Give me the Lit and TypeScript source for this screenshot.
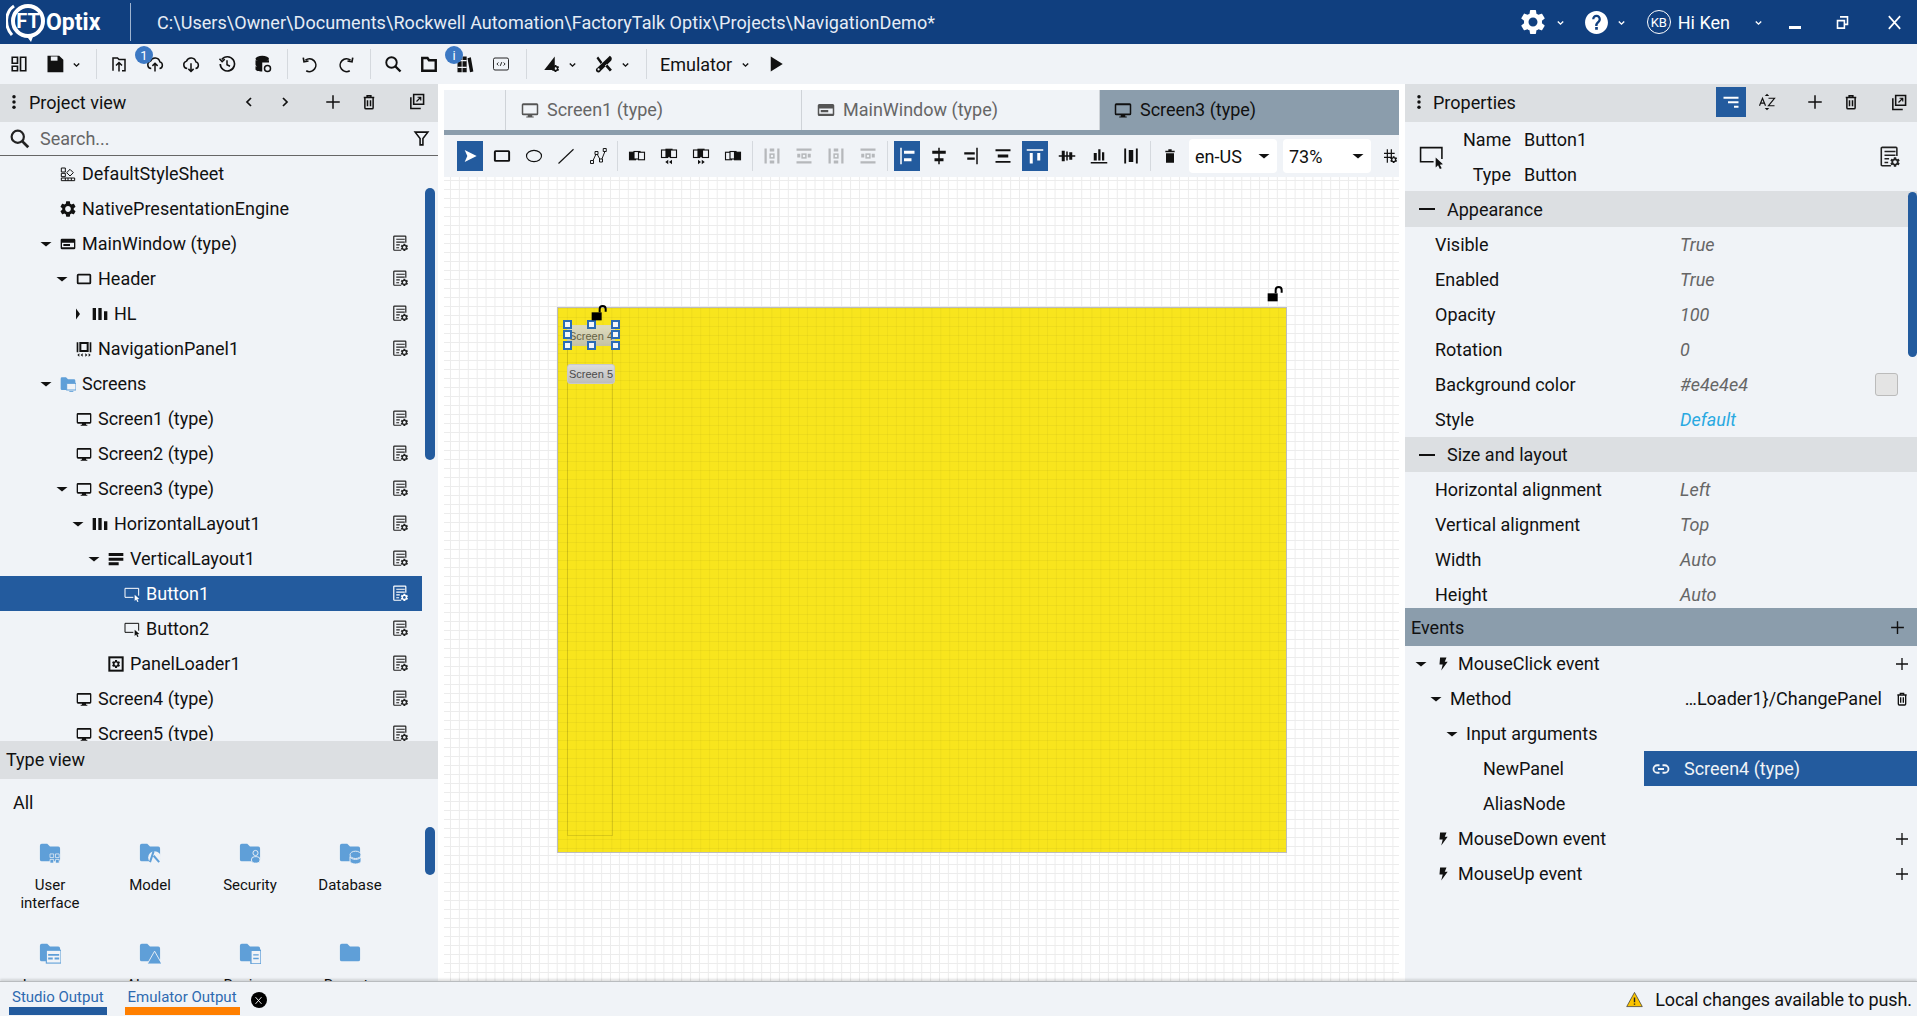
import { LitElement, html, css, svg } from 'lit';
import { customElement } from 'lit/decorators.js';

const GEAR = 'M19.14 12.94c.04-.3.06-.61.06-.94 0-.32-.02-.64-.07-.94l2.03-1.58c.18-.14.23-.41.12-.61l-1.92-3.32c-.12-.22-.37-.29-.59-.22l-2.39.96c-.5-.38-1.03-.7-1.62-.94l-.36-2.54c-.04-.24-.24-.41-.48-.41h-3.84c-.24 0-.43.17-.47.41l-.36 2.54c-.59.24-1.13.57-1.62.94l-2.39-.96c-.22-.08-.47 0-.59.22L2.74 8.87c-.12.21-.08.47.12.61l2.03 1.58c-.05.3-.09.63-.09.94s.02.64.07.94l-2.03 1.58c-.18.14-.23.41-.12.61l1.92 3.32c.12.22.37.29.59.22l2.39-.96c.5.38 1.03.7 1.62.94l.36 2.54c.05.24.24.41.48.41h3.84c.24 0 .44-.17.47-.41l.36-2.54c.59-.24 1.13-.56 1.62-.94l2.39.96c.22.08.47 0 .59-.22l1.92-3.32c.12-.22.07-.47-.12-.61l-2.01-1.58zM12 15.6c-1.98 0-3.6-1.62-3.6-3.6s1.62-3.6 3.6-3.6 3.6 1.62 3.6 3.6-1.62 3.6-3.6 3.6z';
const HELP = 'M12 1C5.9 1 1 5.9 1 12s4.9 11 11 11 11-4.9 11-11S18.100 1 12 1zm1.300 18h-2.600v-2.600h2.600V19zm2-7.600l-1 1c-.9.900-1.300 1.500-1.300 3h-2.300v-.6c0-1.200.5-2.300 1.300-3.100l1.400-1.400c.4-.4.6-.900.6-1.500 0-1.100-.9-2-2-2s-2 .9-2 2H7.800c0-2.300 1.900-4.200 4.200-4.200s4.200 1.900 4.200 4.200c0 1-.4 1.900-.9 2.600z';
const FOLDER = 'M1 4a2 2 0 0 1 2-2h6l3 3h9a2 2 0 0 1 2 2v12a2 2 0 0 1-2 2H3a2 2 0 0 1-2-2z';

const line = (d: string, w = 2) => svg`<path d=${d} fill="none" stroke="currentColor" stroke-width=${w} />`;
const gearAt = (x: number, y: number, s: number) =>
  svg`<path d=${GEAR} fill="currentColor" transform="translate(${x} ${y}) scale(${s})" />`;
const stacks = (front: number) => svg`
  <rect x="2" y="7" width="8" height="10" fill=${front === 0 ? 'currentColor' : 'none'} stroke="currentColor" stroke-width="1.500" />
  <rect x="8" y="6" width="8" height="10" fill=${front === 1 ? 'currentColor' : '#f0f3f7'} stroke="currentColor" stroke-width="1.500" />
  <rect x="14" y="7" width="8" height="10" fill=${front === 2 ? 'currentColor' : '#f0f3f7'} stroke="currentColor" stroke-width="1.500" />`;

const ICONS: Record<string, unknown> = {
  gear: svg`<path d=${GEAR} fill="currentColor" />`,
  gearBig: gearAt(-2.4, -2.4, 1.2),
  help: svg`<path d=${HELP} fill="currentColor" />`,
  chev: line('M7 10l5 5 5-5', 2.6),
  chevL: line('M15 6l-6 6 6 6', 2.6),
  chevR: line('M9 6l6 6-6 6', 2.6),
  plus: line('M12 3v18M3 12h18', 2),
  trash: svg`<path d="M5 6h14M9.500 6V3.500h5V6M6.500 6.500v13a1.500 1.500 0 0 0 1.500 1.500h8a1.500 1.500 0 0 0 1.500-1.500v-13M10 9.500v8M14 9.500v8" fill="none" stroke="currentColor" stroke-width="2" />`,
  trashFill: svg`<path d="M6 8h12v14H6zM5 4h14v2.500H5zM9.500 2h5v2h-5z" fill="currentColor" />`,
  copy: svg`<path d="M8 2h14v14H8zM4 6v16h14" fill="none" stroke="currentColor" stroke-width="2.200" /><path d="M12 12l6-6M13.500 6H18v4.500" fill="none" stroke="currentColor" stroke-width="1.700" />`,
  dots: svg`<circle cx="12" cy="5" r="2.300" fill="currentColor" /><circle cx="12" cy="12" r="2.300" fill="currentColor" /><circle cx="12" cy="19" r="2.300" fill="currentColor" />`,
  search: svg`<circle cx="10" cy="10" r="7" fill="none" stroke="currentColor" stroke-width="2.500" /><path d="M15 15l7 7" stroke="currentColor" stroke-width="3.200" />`,
  filter: svg`<path d="M3 3h18l-7 9v9h-4v-9z" fill="none" stroke="currentColor" stroke-width="2.200" />`,
  panels: svg`<path d="M3 3h7v8H3zM3 15h7v6H3zM14 3h7v18h-7z" fill="none" stroke="currentColor" stroke-width="2.200" />`,
  save: svg`<path d="M3 2h14l5 5v15H3z" fill="currentColor" /><rect x="7" y="3" width="8" height="5" fill="#f0f3f7" />`,
  upFolder: svg`<path d="M4 21V4h6l2 2h8v15h-4" fill="none" stroke="currentColor" stroke-width="2" /><path d="M12 22V11M8 14l4-4 4 4" fill="none" stroke="currentColor" stroke-width="2" />`,
  cloudUp: svg`<path d="M7 18a5 5 0 0 1-1-9.800 6.500 6.500 0 0 1 12.500 1A4.500 4.500 0 0 1 18 18" fill="none" stroke="currentColor" stroke-width="2" /><path d="M12 22V11M8.500 14.500L12 11l3.500 3.500" fill="none" stroke="currentColor" stroke-width="2" />`,
  cloudDown: svg`<path d="M7 18a5 5 0 0 1-1-9.800 6.500 6.500 0 0 1 12.500 1A4.500 4.500 0 0 1 18 18" fill="none" stroke="currentColor" stroke-width="2" /><path d="M12 11v11M8.500 18.500L12 22l3.500-3.500" fill="none" stroke="currentColor" stroke-width="2" />`,
  history: svg`<path d="M5 6a9.500 9.500 0 1 1-2 6" fill="none" stroke="currentColor" stroke-width="2.200" /><path d="M2 5l3.500 4L9 5.500M12 7v6l4 2" fill="none" stroke="currentColor" stroke-width="2" />`,
  db: svg`<ellipse cx="11" cy="5" rx="9" ry="4" fill="currentColor" /><path d="M2 7v6c0 2 4 4 9 4V7zM20 7v3h-9V7zM2 15v4c0 2 4 3 9 3v-5z" fill="currentColor" /><circle cx="18" cy="18" r="4" fill="none" stroke="currentColor" stroke-width="2" />`,
  undo: svg`<path d="M6 7a8.500 8.500 0 1 1 1 14" fill="none" stroke="currentColor" stroke-width="2.200" /><path d="M3 3.500l1 5.500 6-1" fill="none" stroke="currentColor" stroke-width="2.200" />`,
  redo: svg`<path d="M18 7a8.500 8.500 0 1 0-1 14" fill="none" stroke="currentColor" stroke-width="2.200" /><path d="M21 3.500l-1 5.500-6-1" fill="none" stroke="currentColor" stroke-width="2.200" />`,
  folderOut: svg`<path d="M3 4h7l2 3h9v14H3z" fill="none" stroke="currentColor" stroke-width="3.200" />`,
  library: svg`<path d="M3 3h5v19H3zM9 3h5v19H9zM15 5l4-1 3 17-4 1z" fill="currentColor" /><path d="M3 8h11M3 16h11" stroke="#f0f3f7" stroke-width="1.500" />`,
  code: svg`<rect x="2" y="4" width="20" height="16" rx="2" fill="none" stroke="currentColor" stroke-width="1.200" /><path d="M8.500 10l-2 2 2 2M15.500 10l2 2-2 2M13 9.500l-2 5" fill="none" stroke="currentColor" stroke-width="1.200" />`,
  shape: svg`<path d="M17 2v18H3z" fill="currentColor" />${gearAt(12, 12, 0.5)}`,
  tools: svg`<path d="M5 3l5 7-2 2-5-7zM19 2a4 4 0 0 1 1.500 6L8 20.500a3 3 0 1 1-4-4L16 5zM13 14l6 7 2.500-2-6-7" fill="currentColor" /><circle cx="5.500" cy="18.500" r="1.300" fill="#f0f3f7" />`,
  play: svg`<path d="M5 2l16 10L5 22z" fill="currentColor" />`,
  arrow: svg`<path d="M4 3l18 9-18 9 4-9z" fill="currentColor" />`,
  rect: svg`<rect x="2.500" y="5.500" width="19" height="13" rx="1" fill="none" stroke="currentColor" stroke-width="2.600" />`,
  ellipse: svg`<ellipse cx="12" cy="12" rx="10" ry="7.500" fill="none" stroke="currentColor" stroke-width="1.500" />`,
  diag: line('M2 22L22 3', 1.500),
  poly: svg`<path d="M4 21L10 8l6 11 6-15" fill="none" stroke="currentColor" stroke-width="1.300" /><path d="M2 18h4v4H2zM8 6h4v4H8zM14 16h4v4h-4zM19 2h4v4h-4z" fill="#f0f3f7" stroke="currentColor" stroke-width="1.300" />`,
  ordA: svg`${stacks(0)}`,
  ordB: svg`<g transform="translate(0 -3)">${stacks(1)}</g><path d="M11 17v6l-4-3zM16 17v6l-4-3z" fill="currentColor" />`,
  ordC: svg`<g transform="translate(0 -3)">${stacks(1)}</g><path d="M8 17v6l4-3zM13 17v6l4-3z" fill="currentColor" />`,
  ordD: svg`${stacks(2)}`,
  distA: svg`<path d="M2 2h3v20H2zM19 2h3v20h-3z" fill="currentColor" /><rect x="9" y="2" width="6" height="4" fill="currentColor" /><rect x="9.500" y="9.500" width="5" height="5" fill="none" stroke="currentColor" stroke-width="2" /><rect x="9" y="18" width="6" height="4" fill="currentColor" />`,
  distB: svg`<path d="M2 2h20v3H2zM2 19h20v3H2z" fill="currentColor" /><rect x="3" y="9" width="4" height="5" fill="currentColor" /><rect x="9.500" y="9.500" width="5" height="5" fill="none" stroke="currentColor" stroke-width="2" /><rect x="17" y="9" width="4" height="5" fill="currentColor" />`,
  alL: svg`<path d="M3 1h2v22H3zM8 5h14v4H8zM8 15h10v4H8z" fill="currentColor" />`,
  alC: svg`<path d="M11 1h2v22h-2zM3 5h18v4H3zM6 15h12v4H6z" fill="currentColor" />`,
  alR: svg`<path d="M19 1h2v22h-2zM3 7h14v3H3zM7 14h10v3H7z" fill="currentColor" />`,
  alV: svg`<path d="M2 3h20v2.500H2zM2 18.500h20V21H2zM5 10h14v4H5z" fill="currentColor" />`,
  alT: svg`<path d="M1 3h22v2H1zM5 8h4v14H5zM15 8h4v10h-4z" fill="currentColor" />`,
  alM: svg`<path d="M1 11h22v2H1zM5 5h4v14H5zM15 7h4v10h-4zM11 6h2v12h-2z" fill="currentColor" />`,
  alB: svg`<path d="M1 20h22v2H1zM5 8h4v10H5zM11 3h3v15h-3zM16 7h3v11h-3z" fill="currentColor" />`,
  alE: svg`<path d="M3 2h2.500v20H3zM18.500 2H21v20h-2.500zM9 4h6v16H9z" fill="currentColor" />`,
  gridGear: svg`<path d="M3 8h16M3 14h12M8 2v20M14 2v14" fill="none" stroke="currentColor" stroke-width="1.800" />${gearAt(11, 11, 0.54)}`,
  propDoc: svg`<path d="M13 21.500H3.500a1 1 0 0 1-1-1v-18a1 1 0 0 1 1-1h15a1 1 0 0 1 1 1V11" fill="none" stroke="currentColor" stroke-width="1.700" /><path d="M6 6h12M6 10h12M6 14h5M6 18h4" stroke="currentColor" stroke-width="1.600" />${gearAt(11, 11, 0.54)}`,
  sheet: svg`<path d="M2 3h6v6H2zM2 11h6v5H2zM2 18h20v4H2z" fill="none" stroke="currentColor" stroke-width="1.500" /><path d="M15 5l5 5-5 5-5-5z" fill="none" stroke="currentColor" stroke-width="1.500" /><path d="M8 18v4M12 18v4M17 18v4" stroke="currentColor" stroke-width="1.500" />`,
  window: svg`<path fill-rule="evenodd" d="M3 4h18a2 2 0 0 1 2 2v12a2 2 0 0 1-2 2H3a2 2 0 0 1-2-2V6a2 2 0 0 1 2-2zm0 6v7h18v-7zm2 2h10v3H5z" fill="currentColor" />`,
  hl: svg`<path d="M1 3h5v18H1zM9.500 3h5v18h-5zM18 8h5v13h-5z" fill="currentColor" />`,
  vl: svg`<path d="M1 3h22v4.500H1zM1 10h22v4.500H1zM1 17h15v4.500H1z" fill="currentColor" />`,
  nav: svg`<path d="M1 2h2.500v15H1zM20.500 2H23v15h-2.500z" fill="currentColor" /><rect x="6.500" y="3" width="11" height="12" fill="none" stroke="currentColor" stroke-width="3" /><path d="M2 21l3-2.500v5zM7 21l3-2.500v5zM22 21l-3-2.500v5zM17 21l-3-2.500v5z" fill="currentColor" />`,
  monitor: svg`<path fill-rule="evenodd" d="M3 3h18a2 2 0 0 1 2 2v12a2 2 0 0 1-2 2h-6v1.500h2V22H7v-1.500h2V19H3a2 2 0 0 1-2-2V5a2 2 0 0 1 2-2zm0 2.500V16.500h18V5.500z" fill="currentColor" />`,
  folderMon: svg`<path d=${FOLDER} fill="#5f9fd8" /><rect x="10" y="11" width="14" height="10" fill="#f0f3f7" stroke="#5f9fd8" stroke-width="1.500" /><path d="M14 23.500h6" stroke="#5f9fd8" stroke-width="1.500" />`,
  button: svg`<path d="M14 17H1.500V3.500h20.500v11" fill="none" stroke="currentColor" stroke-width="1.500" /><path d="M16 13l7 6.500-3 .3 1.800 3.500-1.800.7-1.700-3.600-2.300 2.100z" fill="currentColor" />`,
  loader: svg`<rect x="2" y="2" width="20" height="20" fill="none" stroke="currentColor" stroke-width="3" />${gearAt(4.500, 4.500, 0.63)}`,
  caretD: svg`<path d="M1 8h22L12 17z" fill="currentColor" />`,
  caretR: svg`<path d="M8 1v22l8-11z" fill="currentColor" />`,
  bolt: svg`<path d="M7 1h11l-3 7h5L9 23l2.500-10H6z" fill="currentColor" />`,
  link: svg`<path d="M10 7H7a5 5 0 0 0 0 10h3M14 7h3a5 5 0 0 1 0 10h-3M8 12h8" fill="none" stroke="currentColor" stroke-width="2.400" />`,
  sortList: svg`<path d="M2 5h20v2.500H2zM8 11h14v2.500H8zM16 17h6v2.500h-6z" fill="currentColor" />`,
  az: svg`<path d="M12 1l3 3H9zM12 23l-3-3h6z" fill="currentColor" /><path d="M2 17l4-10 4 10M3.500 13.500h5M14 7h8l-8 10h8" fill="none" stroke="currentColor" stroke-width="1.600" />`,
  restore: svg`<path d="M8 3h12v12h-5M4 9h11v12H4z" fill="none" stroke="currentColor" stroke-width="2.500" />`,
  closeX: line('M4 3l16 18M20 3L4 21', 2.400),
  warn: svg`<path d="M12 2l11 20H1z" fill="#fbc400" stroke="#333" stroke-width="1" /><path d="M11 9h2v7h-2zM11 17.500h2v2h-2z" fill="#222" />`,
  lock: svg`<rect x="1" y="11" width="15" height="12" fill="currentColor" /><path d="M13 11V6a4.500 4.500 0 0 1 9 0v4" fill="none" stroke="currentColor" stroke-width="3" />`,
};

const ic = (name: string, size = 18) =>
  html`<svg class="ic" viewBox="0 0 24 24" width=${size} height=${size}>${ICONS[name]}</svg>`;

const tile = (overlay: unknown) =>
  html`<svg viewBox="0 0 24 24" width="22" height="22"><path d=${FOLDER} fill="#5f9fd8" />${overlay}</svg>`;

interface TreeItem { label: string; level: number; icon: string; caret?: 'd' | 'r'; doc?: boolean; sel?: boolean; }

const TREE: TreeItem[] = [
  { label: 'DefaultStyleSheet', level: 0, icon: 'sheet' },
  { label: 'NativePresentationEngine', level: 0, icon: 'gearBig' },
  { label: 'MainWindow (type)', level: 0, icon: 'window', caret: 'd', doc: true },
  { label: 'Header', level: 1, icon: 'rect', caret: 'd', doc: true },
  { label: 'HL', level: 2, icon: 'hl', caret: 'r', doc: true },
  { label: 'NavigationPanel1', level: 1, icon: 'nav', doc: true },
  { label: 'Screens', level: 0, icon: 'folderMon', caret: 'd' },
  { label: 'Screen1 (type)', level: 1, icon: 'monitor', doc: true },
  { label: 'Screen2 (type)', level: 1, icon: 'monitor', doc: true },
  { label: 'Screen3 (type)', level: 1, icon: 'monitor', caret: 'd', doc: true },
  { label: 'HorizontalLayout1', level: 2, icon: 'hl', caret: 'd', doc: true },
  { label: 'VerticalLayout1', level: 3, icon: 'vl', caret: 'd', doc: true },
  { label: 'Button1', level: 4, icon: 'button', doc: true, sel: true },
  { label: 'Button2', level: 4, icon: 'button', doc: true },
  { label: 'PanelLoader1', level: 3, icon: 'loader', doc: true },
  { label: 'Screen4 (type)', level: 1, icon: 'monitor', doc: true },
  { label: 'Screen5 (type)', level: 1, icon: 'monitor', doc: true },
];

const TILES: [string, unknown][] = [
  ['User interface', svg`<path d="M12 13h4v4h-4zM18 13h4v4h-4zM12 19h4v4h-4zM18 19h4v4h-4z" fill="#5f9fd8" stroke="#f0f3f7" stroke-width=".8" />`],
  ['Model', svg`<circle cx="17" cy="17" r="7" fill="#f0f3f7" /><path d="M16 10l-4 12M16 15l6 7" stroke="#5f9fd8" stroke-width="2.200" fill="none" />`],
  ['Security', svg`<circle cx="18" cy="12" r="2.800" fill="#5f9fd8" stroke="#f0f3f7" /><rect x="13.500" y="16" width="9.500" height="7" rx="3.500" fill="#5f9fd8" stroke="#f0f3f7" />`],
  ['Database', svg`<ellipse cx="18" cy="14" rx="6" ry="4" fill="#5f9fd8" stroke="#f0f3f7" /><path d="M12 16v5c0 1.500 3 3 6 3s6-1.500 6-3v-5c0 1.500-3 3-6 3s-6-1.500-6-3z" fill="#5f9fd8" stroke="#f0f3f7" />`],
  ['Loggers', svg`<rect x="8" y="9" width="16" height="14" fill="#f0f3f7" stroke="#5f9fd8" stroke-width="1.200" /><path d="M10 13h12v2H10zM10 17h5v2h-5zM17 17h5v2h-5z" fill="#5f9fd8" />`],
  ['Alarms', svg`<path d="M17 10l8 14H9z" fill="#5f9fd8" stroke="#f0f3f7" />`],
  ['Recipes', svg`<rect x="13" y="9" width="11" height="15" rx="1" fill="#f0f3f7" stroke="#5f9fd8" stroke-width="1.500" /><path d="M15.500 14h6M15.500 18h6" stroke="#5f9fd8" stroke-width="1.500" />`],
  ['Reports', svg``],
];

const APPEARANCE: [string, string, string?][] = [
  ['Visible', 'True'], ['Enabled', 'True'], ['Opacity', '100'], ['Rotation', '0'],
  ['Background color', '#e4e4e4', 'swatch'], ['Style', 'Default', 'link'],
];
const SIZING: [string, string, string?][] = [
  ['Horizontal alignment', 'Left'], ['Vertical alignment', 'Top'], ['Width', 'Auto'], ['Height', 'Auto'],
];

@customElement('app-root')
export class AppRoot extends LitElement {
  static styles = css`
    :host {
      display: flex;
      flex-direction: column;
      width: 1917px;
      height: 1016px;
      overflow: hidden;
      background: #fff;
      font-family: Roboto, "Noto Sans", sans-serif;
      font-size: 18px;
      color: #111;
    }
    .ic { display: block; flex: none; }

    .title {
      display: flex;
      align-items: center;
      height: 44px;
      flex: none;
      background: #103f7f;
      color: #fff;
      padding-left: 6px;
    }
    .logo-name { font-size: 23px; font-weight: 700; width: 84px; }
    .title-div { width: 1px; height: 38px; background: #9fb4d0; }
    .path { margin-left: 26px; flex: 1; color: #e6ecf5; letter-spacing: 0.06px; }
    .title .ic { color: #fff; }
    .t-gear { margin-right: 6px; }
    .t-chev { margin-right: 19px; }
    .t-chev.first { margin-right: 17px; }
    .hi { margin: 0 22px 0 7px; }
    .kb {
      width: 22px; height: 22px; border: 1px solid #fff; border-radius: 50%;
      font-size: 13px; display: flex; align-items: center; justify-content: center;
    }
    .min { width: 12px; height: 3px; background: #fff; margin: 10px 34px 0 24px; }
    .restore { margin-right: 36px; }
    .x { margin-right: 14px; }

    .toolbar {
      display: flex;
      align-items: center;
      height: 40px;
      flex: none;
      background: #f0f3f7;
      padding-left: 1px;
    }
    .tb { width: 36px; height: 36px; display: flex; align-items: center; justify-content: center; position: relative; }
    .tb-caret { width: 14px; display: flex; justify-content: center; margin: 0 7px 0 -4px; }
    .sep { width: 1px; height: 30px; background: #d5d9de; margin: 0 4px 0 6px; }
    .sep.wide { margin-left: 7px; margin-right: 6px; }
    .emu { margin-left: 7px; }
    .emu-caret { margin: 0 6px 0 6px; width: 14px; display: flex; justify-content: center; }
    .badge {
      position: absolute; top: 0; left: -2px;
      width: 18px; height: 18px; border-radius: 50%;
      background: #3c78c3; color: #fff; font-size: 13px;
      display: flex; align-items: center; justify-content: center;
    }

    .main { display: flex; flex: 1; min-height: 0; background: #fff; }

    .left { width: 438px; flex: none; display: flex; flex-direction: column; background: #f0f3f7; }
    .head {
      display: flex; align-items: center;
      height: 38px; flex: none; box-sizing: border-box;
      padding-bottom: 2px;
      background: #dcdfe2;
    }
    .head .grip { margin: 0 6px 0 5px; }
    .pv-nav { margin-left: 115px; display: flex; gap: 20px; }
    .pv-acts { margin-left: 31px; display: flex; }
    .pv-acts .ic { margin-right: 18px; }
    .pv-acts .ic:last-child { margin: 0 0 0 12px; }
    .search {
      display: flex; align-items: center; height: 33px; flex: none;
      border-bottom: 1px solid #666; padding-left: 9px;
      color: #666;
    }
    .search .ic:first-child { color: #222; margin-right: 10px; }
    .search span { flex: 1; }
    .search .ic:last-child { color: #111; margin-right: 8px; }

    .tree-wrap { display: flex; height: 585px; flex: none; overflow: hidden; }
    .tree { width: 422px; flex: none; }
    .row { display: flex; align-items: center; height: 35px; padding-right: 13px; box-sizing: border-box; }
    .row.sel { background: #235b9e; color: #fff; }
    .caret { width: 20px; flex: none; display: flex; justify-content: flex-start; }
    .ti { width: 16px; flex: none; margin-right: 6px; }
    .doc { margin-left: auto; color: #222; }
    .row.sel .doc { color: #fff; }
    .track { padding-left: 3px; }
    .thumb { width: 10px; border-radius: 5px; background: #235b9e; }
    .thumb.tree-thumb { margin-top: 32px; height: 272px; }
    .thumb.type-thumb { margin-top: 48px; height: 48px; }

    .type-head { padding-left: 6px; }
    .type-body { flex: 1; min-height: 0; overflow: hidden; display: flex; }
    .type-main { width: 422px; flex: none; }
    .all { height: 46px; display: flex; align-items: center; padding-left: 13px; }
    .tiles { display: grid; grid-template-columns: repeat(4, 100px); grid-auto-rows: 100px; }
    .tile { display: flex; flex-direction: column; align-items: center; padding-top: 17px; font-size: 15px; line-height: 18px; text-align: center; }
    .tile svg { margin-bottom: 12px; flex: none; }
    .tile span { width: 70px; }

    .center { width: 955px; flex: none; margin: 0 6px; display: flex; flex-direction: column; padding-top: 6px; }
    .tabs {
      display: flex; height: 45px; flex: none; box-sizing: border-box;
      background: #f0f3f7; border-bottom: 5px solid #8b9dac;
    }
    .tab { display: flex; align-items: center; gap: 8px; color: #666; box-sizing: border-box; padding-bottom: 1px; }
    .tab .ic { color: #555; }
    .tab.t1 { margin-left: 61px; width: 296px; padding-left: 15px; border-left: 1px solid #cfd3d8; }
    .tab.t2 { width: 299px; padding-left: 15px; border-left: 1px solid #cfd3d8; border-right: 1px solid #cfd3d8; }
    .tab.t3 { flex: 1; background: #8b9dac; color: #111; padding-left: 14px; }
    .tab.t3 .ic { color: #111; }
    .ctools {
      display: flex; align-items: center; height: 42px; flex: none;
      background: #f0f3f7; padding-left: 13px;
    }
    .cb { width: 26px; height: 30px; display: flex; align-items: center; justify-content: center; margin-right: 6px; }
    .cb.on { background: #235b9e; color: #fff; }
    .cb.off { color: #b5b8bb; }
    .csep { width: 1px; height: 30px; background: #d5d9de; margin: 0 6px 0 0; }
    .sel-box {
      width: 88px; height: 34px; background: #fff; border-radius: 4px; box-sizing: border-box;
      display: flex; align-items: center; justify-content: space-between;
      padding: 0 7px 0 6px; margin-right: 6px;
    }
    .grid-gear { margin-left: 5px; }
    .canvas {
      position: relative; flex: 1; min-height: 0; overflow: hidden;
      background-color: #fff;
      background-image:
        linear-gradient(to right, #ececec 1px, transparent 1px),
        linear-gradient(to bottom, #ececec 1px, transparent 1px);
      background-size: 8.9px 9px;
      background-position: 6px 3px;
    }
    .stage {
      position: absolute; left: 113px; top: 130px; width: 730px; height: 546px;
      box-sizing: border-box;
      border: 1px solid #bdbdbd;
      background-color: #f8e51d;
      background-image:
        linear-gradient(to right, rgba(0,0,0,.04) 1px, transparent 1px),
        linear-gradient(to bottom, rgba(0,0,0,.04) 1px, transparent 1px);
      background-size: 8.9px 9px;
    }
    .outline { position: absolute; left: 9px; top: 17px; width: 46px; height: 511px; border: 1px solid rgba(0,0,0,.12); box-sizing: border-box; }
    .btn {
      position: absolute; left: 9px; box-sizing: border-box;
      font: 11px "Liberation Sans", sans-serif; color: #4a4a4a;
      background: linear-gradient(#dcdcdc, #bdbdbd);
      display: flex; align-items: center; justify-content: center;
    }
    .b4 { top: 17px; width: 48px; height: 21px; opacity: .85; }
    .b5 { top: 56px; width: 48px; height: 20px; border-radius: 3px; border: 1px solid #c9c9c9; }
    .handle { position: absolute; width: 9px; height: 9px; box-sizing: border-box; background: #f3f6fa; border: 2px solid #2b6cb5; }
    .lock { position: absolute; color: #000; }

    .right { width: 512px; flex: none; display: flex; flex-direction: column; background: #f0f3f7; }
    .prop-head .ic:first-child { margin: 0 5px 0 5px; }
    .prop-tools { margin-left: auto; display: flex; align-items: center; }
    .pt-on { width: 30px; height: 30px; background: #235b9e; color: #fff; display: flex; align-items: center; justify-content: center; margin-right: 12px; }
    .gap-az { width: 30px; }
    .gap-plus { width: 18px; }
    .gap-trash { width: 30px; }
    .gap-end { width: 10px; }
    .prop-scroll { position: relative; height: 486px; flex: none; overflow: hidden; }
    .thumb.prop-thumb { position: absolute; right: 0; top: 70px; height: 165px; width: 9px; border-radius: 5px; }
    .ident { display: flex; align-items: center; height: 69px; padding-left: 14px; }
    .ident-names { margin-left: 19px; display: grid; grid-template-columns: 48px auto; column-gap: 13px; grid-auto-rows: 35px; align-items: center; }
    .ident-names b { font-weight: 400; text-align: right; }
    .ident .doc { margin-right: 16px; }
    .g-head { display: flex; align-items: center; height: 35px; background: #dcdfe2; padding-left: 14px; gap: 12px; }
    .g-head.first { height: 36px; }
    .dash { width: 16px; height: 2px; background: #111; }
    .p-row { display: flex; align-items: center; height: 35px; padding-left: 30px; }
    .p-label { width: 245px; flex: none; }
    .p-val { font-style: italic; color: #666; }
    .p-val.link { color: #29a9e1; }
    .swatch { width: 23px; height: 23px; background: #e4e4e4; border: 1px solid #bbb; border-radius: 3px; box-sizing: border-box; margin-left: auto; margin-right: 19px; }
    .ev-head { display: flex; align-items: center; justify-content: space-between; height: 38px; flex: none; background: #8b9dac; padding: 0 11px 0 6px; box-sizing: border-box; }
    .e-row { display: flex; align-items: center; height: 35px; position: relative; padding-right: 7px; }
    .e-row .end { margin-left: auto; }
    .lv0 { padding-left: 10px; }
    .lv1 { padding-left: 25px; }
    .lv2 { padding-left: 41px; }
    .lv3 { padding-left: 78px; }
    .nocap { padding-left: 30px; }
    .e-row .c { width: 20px; flex: none; }
    .ev-bolt-wrap { width: 22px; flex: none; display: flex; justify-content: flex-start; margin-left: 1px; }
    .method-val { margin-left: auto; margin-right: 12px; }
    .bound {
      position: absolute; left: 239px; right: 0; top: 0; bottom: 0;
      background: #235b9e; color: #f0f3f7;
      display: flex; align-items: center; gap: 14px; padding-left: 8px;
    }

    .status {
      display: flex; align-items: center; height: 35px; flex: none; box-sizing: border-box;
      background: #f0f3f7; border-top: 1px solid #b9bcbf; box-shadow: 0 -2px 2px rgba(0,0,0,.12);
      position: relative; font-size: 15px; padding-left: 9px;
    }
    .out { height: 32px; box-sizing: border-box; padding: 6px 3px 0; color: #2e6ab0; border-bottom: 8px solid #235b9e; margin-right: 18px; line-height: 16px; }
    .out.emu-out { border-bottom-color: #ff7f00; margin-right: 11px; }
    .dismiss { width: 16px; height: 16px; border-radius: 50%; background: #000; color: #fff; display: flex; align-items: center; justify-content: center; margin-top: 2px; }
    .local { margin-left: auto; display: flex; align-items: center; gap: 12px; font-size: 18px; padding-right: 5px; letter-spacing: -0.1px; }
  `;

  private renderTree() {
    return TREE.map(
      (t) => html`
        <div class="row ${t.sel ? 'sel' : ''}" style="padding-left:${40 + t.level * 16}px">
          <span class="caret">${t.caret === 'd' ? ic('caretD', 12) : t.caret === 'r' ? ic('caretR', 12) : ''}</span>
          <span class="ti">${ic(t.icon, 16)}</span>
          <span>${t.label}</span>
          ${t.doc ? html`<span class="doc">${ic('propDoc', 17)}</span>` : ''}
        </div>
      `,
    );
  }

  private renderProps(rows: [string, string, string?][]) {
    return rows.map(
      ([k, v, kind]) => html`
        <div class="p-row">
          <span class="p-label">${k}</span>
          <span class="p-val ${kind === 'link' ? 'link' : ''}">${v}</span>
          ${kind === 'swatch' ? html`<span class="swatch"></span>` : ''}
        </div>
      `,
    );
  }

  private cb(name: string, cls = '', size = 18) {
    return html`<span class="cb ${cls}">${ic(name, size)}</span>`;
  }

  private handles() {
    const pts = [[9, 15], [33, 15], [57, 15], [9, 25], [57, 25], [9, 36], [33, 36], [57, 36]];
    return pts.map(([x, y]) => html`<span class="handle" style="left:${x - 4}px;top:${y - 3}px"></span>`);
  }

  render() {
    return html`
      <div class="title">
        <svg viewBox="0 0 40 40" width="40" height="40">
          <path d="M6 33C-2 24-1 10 8 4" fill="none" stroke="#fff" stroke-width="3" />
          <circle cx="22" cy="19" r="15" fill="#103f7f" stroke="#fff" stroke-width="4" />
          <path d="M19 32l6 8 3-8z" fill="#fff" />
          <text x="22" y="26" text-anchor="middle" font-family="Roboto" font-weight="700" font-size="20" fill="#fff">FT</text>
        </svg>
        <span class="logo-name">Optix</span>
        <span class="title-div"></span>
        <span class="path">C:\\Users\\Owner\\Documents\\Rockwell Automation\\FactoryTalk Optix\\Projects\\NavigationDemo*</span>
        <span class="t-gear">${ic('gear', 30)}</span>
        <span class="t-chev first">${ic('chev', 13)}</span>
        <span class="t-gear">${ic('help', 25)}</span>
        <span class="t-chev">${ic('chev', 13)}</span>
        <span class="kb">KB</span>
        <span class="hi">Hi Ken</span>
        ${ic('chev', 13)}
        <span class="min"></span>
        <span class="restore">${ic('restore', 15)}</span>
        <span class="x">${ic('closeX', 17)}</span>
      </div>

      <div class="toolbar">
        <span class="tb">${ic('panels', 18)}</span>
        <span class="tb">${ic('save', 20)}</span>
        <span class="tb-caret">${ic('chev', 13)}</span>
        <span class="sep"></span>
        <span class="tb">${ic('upFolder', 18)}</span>
        <span class="tb">${ic('cloudUp', 18)}<span class="badge">1</span></span>
        <span class="tb">${ic('cloudDown', 18)}</span>
        <span class="tb">${ic('history', 18)}</span>
        <span class="tb">${ic('db', 18)}</span>
        <span class="sep"></span>
        <span class="tb">${ic('undo', 18)}</span>
        <span class="tb">${ic('redo', 18)}</span>
        <span class="sep"></span>
        <span class="tb">${ic('search', 18)}</span>
        <span class="tb">${ic('folderOut', 18)}</span>
        <span class="tb">${ic('library', 20)}<span class="badge">i</span></span>
        <span class="tb">${ic('code', 18)}</span>
        <span class="sep wide"></span>
        <span class="tb">${ic('shape', 18)}</span>
        <span class="tb-caret">${ic('chev', 13)}</span>
        <span class="tb">${ic('tools', 20)}</span>
        <span class="tb-caret">${ic('chev', 13)}</span>
        <span class="sep wide"></span>
        <span class="emu">Emulator</span>
        <span class="emu-caret">${ic('chev', 13)}</span>
        <span class="tb">${ic('play', 18)}</span>
      </div>

      <div class="main">
        <div class="left">
          <div class="head">
            <span class="grip">${ic('dots', 18)}</span>
            <span>Project view</span>
            <span class="pv-nav">${ic('chevL', 16)}${ic('chevR', 16)}</span>
            <span class="pv-acts">${ic('plus', 18)}${ic('trash', 18)}${ic('copy', 17)}</span>
          </div>
          <div class="search">
            ${ic('search', 21)}
            <span>Search...</span>
            ${ic('filter', 17)}
          </div>
          <div class="tree-wrap">
            <div class="tree">${this.renderTree()}</div>
            <div class="track"><div class="thumb tree-thumb"></div></div>
          </div>
          <div class="head type-head">Type view</div>
          <div class="type-body">
            <div class="type-main">
              <div class="all">All</div>
              <div class="tiles">
                ${TILES.map(([label, overlay]) => html`<div class="tile">${tile(overlay)}<span>${label}</span></div>`)}
              </div>
            </div>
            <div class="track"><div class="thumb type-thumb"></div></div>
          </div>
        </div>

        <div class="center">
          <div class="tabs">
            <div class="tab t1">${ic('monitor', 18)}<span>Screen1 (type)</span></div>
            <div class="tab t2">${ic('window', 18)}<span>MainWindow (type)</span></div>
            <div class="tab t3">${ic('monitor', 18)}<span>Screen3 (type)</span></div>
          </div>
          <div class="ctools">
            ${this.cb('arrow', 'on', 16)}
            ${this.cb('rect')}
            ${this.cb('ellipse')}
            ${this.cb('diag')}
            ${this.cb('poly')}
            <span class="csep"></span>
            ${this.cb('ordA')}
            ${this.cb('ordB')}
            ${this.cb('ordC')}
            ${this.cb('ordD')}
            <span class="csep"></span>
            ${this.cb('distA', 'off')}
            ${this.cb('distB', 'off')}
            ${this.cb('distA', 'off')}
            ${this.cb('distB', 'off')}
            <span class="csep"></span>
            ${this.cb('alL', 'on')}
            ${this.cb('alC')}
            ${this.cb('alR')}
            ${this.cb('alV')}
            ${this.cb('alT', 'on')}
            ${this.cb('alM')}
            ${this.cb('alB')}
            ${this.cb('alE')}
            <span class="csep"></span>
            ${this.cb('trashFill', '', 16)}
            <span class="sel-box"><span>en-US</span>${ic('caretD', 12)}</span>
            <span class="sel-box"><span>73%</span>${ic('caretD', 12)}</span>
            <span class="grid-gear">${ic('gridGear', 16)}</span>
          </div>
          <div class="canvas">
            <div class="stage">
              <div class="outline"></div>
              <div class="btn b4">Screen 4</div>
              <div class="btn b5">Screen 5</div>
              ${this.handles()}
            </div>
            <span class="lock" style="left:147px;top:128px">${ic('lock', 16)}</span>
            <span class="lock" style="left:823px;top:109px">${ic('lock', 16)}</span>
          </div>
        </div>

        <div class="right">
          <div class="head prop-head">
            ${ic('dots', 18)}
            <span>Properties</span>
            <span class="prop-tools">
              <span class="pt-on">${ic('sortList', 18)}</span>
              ${ic('az', 18)}
              <span class="gap-az"></span>
              ${ic('plus', 18)}
              <span class="gap-plus"></span>
              ${ic('trash', 18)}
              <span class="gap-trash"></span>
              ${ic('copy', 17)}
              <span class="gap-end"></span>
            </span>
          </div>
          <div class="prop-scroll">
            <div class="ident">
              ${ic('button', 25)}
              <div class="ident-names">
                <b>Name</b><span>Button1</span>
                <b>Type</b><span>Button</span>
              </div>
              <span class="doc">${ic('propDoc', 22)}</span>
            </div>
            <div class="g-head first"><span class="dash"></span>Appearance</div>
            ${this.renderProps(APPEARANCE)}
            <div class="g-head"><span class="dash"></span>Size and layout</div>
            ${this.renderProps(SIZING)}
            <div class="thumb prop-thumb"></div>
          </div>
          <div class="ev-head"><span>Events</span>${ic('plus', 17)}</div>
          <div class="e-row lv0">
            <span class="c">${ic('caretD', 12)}</span>
            <span class="ev-bolt-wrap">${ic('bolt', 14)}</span>
            <span>MouseClick event</span>
            <span class="end">${ic('plus', 16)}</span>
          </div>
          <div class="e-row lv1">
            <span class="c">${ic('caretD', 12)}</span>
            <span>Method</span>
            <span class="method-val">…Loader1}/ChangePanel</span>
            <span>${ic('trash', 16)}</span>
          </div>
          <div class="e-row lv2">
            <span class="c">${ic('caretD', 12)}</span>
            <span>Input arguments</span>
          </div>
          <div class="e-row lv3">
            <span>NewPanel</span>
            <div class="bound">${ic('link', 18)}<span>Screen4 (type)</span></div>
          </div>
          <div class="e-row lv3"><span>AliasNode</span></div>
          <div class="e-row nocap">
            <span class="ev-bolt-wrap">${ic('bolt', 14)}</span>
            <span>MouseDown event</span>
            <span class="end">${ic('plus', 16)}</span>
          </div>
          <div class="e-row nocap">
            <span class="ev-bolt-wrap">${ic('bolt', 14)}</span>
            <span>MouseUp event</span>
            <span class="end">${ic('plus', 16)}</span>
          </div>
        </div>
      </div>

      <div class="status">
        <span class="out">Studio Output</span>
        <span class="out emu-out">Emulator Output</span>
        <span class="dismiss">${ic('closeX', 9)}</span>
        <span class="local">${ic('warn', 17)}<span>Local changes available to push.</span></span>
      </div>
    `;
  }
}
